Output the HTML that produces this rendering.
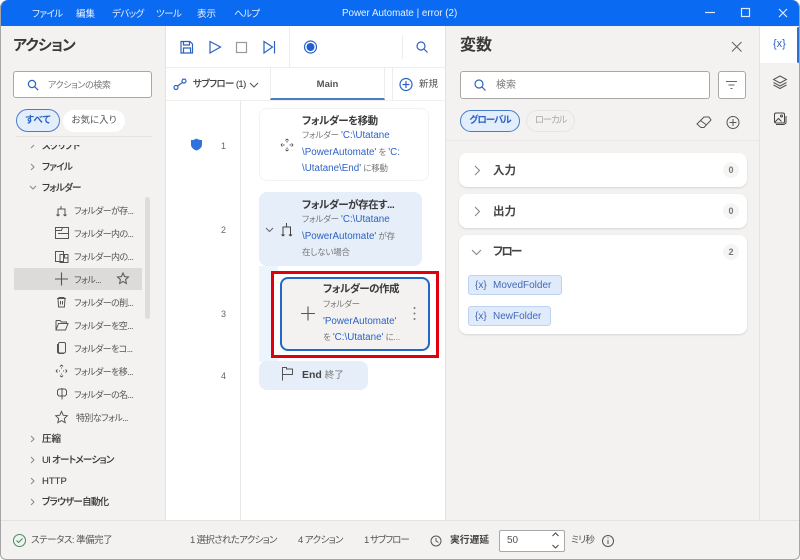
<!DOCTYPE html>
<html lang="ja"><head><meta charset="utf-8"><style>
*{box-sizing:border-box}
html,body{margin:0;padding:0;width:800px;height:560px;overflow:hidden;background:#fff}
body{font-family:"Liberation Sans","Noto Sans CJK JP",sans-serif;color:#323130;position:relative;font-feature-settings:"palt"}
.a{position:absolute;white-space:nowrap}
svg{position:absolute;overflow:visible;fill:none}
.t{font-size:9.5px;line-height:12px;color:#555}
.tb{color:#e8f1ff;font-size:9.5px;top:9px;line-height:12px;letter-spacing:-.6px}
.tree{font-size:9.5px;font-weight:500;color:#3a3a3a;line-height:12px;-webkit-text-stroke:.1px #3a3a3a;letter-spacing:-.7px}
.leaf{font-size:9px;color:#555;line-height:12px;left:74px;letter-spacing:-.6px}
.chev{stroke:#888;stroke-width:1}
.b{color:#2c62c4;font-size:9.8px;line-height:1;letter-spacing:0}
.desc{font-size:8.5px;color:#777;line-height:16.5px;letter-spacing:-.2px}
.ttl{font-size:10.5px;font-weight:700;line-height:14px;color:#3a3a3a;letter-spacing:-.5px}
.card{background:#fff;border-radius:8px;box-shadow:0 1px 2px rgba(0,0,0,.12)}
.chip{background:#dfeafb;border:1px solid #bcd3f2;border-radius:3px;height:20px;color:#4468b4;font-size:10px;line-height:19px;padding-left:6px}
.chip span{display:inline-block;width:18px}
.cnt{width:16px;height:16px;border-radius:8px;background:#f5f5f4;font-size:9px;font-weight:700;color:#777;text-align:center;line-height:16px}
.sec{left:493px;font-size:11.5px;font-weight:700;line-height:14px;color:#444}
.ic{stroke:#555;stroke-width:1}
.blue{stroke:#2c62c4;stroke-width:1.2}
</style></head><body>
<div class="a" style="left:0;top:0;width:800px;height:560px;background:#f3f2f1;border-radius:8px 8px 6px 6px;overflow:hidden">
<div class="a" style="left:0;top:0;width:800px;height:26px;background:#0b6af2"></div>
<div class="a tb" style="left:32px">ファイル</div>
<div class="a tb" style="left:76px;letter-spacing:0">編集</div>
<div class="a tb" style="left:112px">デバッグ</div>
<div class="a tb" style="left:156px">ツール</div>
<div class="a tb" style="left:197px;letter-spacing:0">表示</div>
<div class="a tb" style="left:234px">ヘルプ</div>
<div class="a tb" style="left:342px;font-size:9.8px;letter-spacing:0;top:8px">Power Automate | error (2)</div>
<svg style="left:0;top:0" width="800" height="26"><path d="M705 12.500h10" stroke="#dfeaff" stroke-width="1.200"/><rect x="741.500" y="8.500" width="8" height="8" stroke="#dfeaff" stroke-width="1.200"/><path d="M779 9l8 8M787 9l-8 8" stroke="#dfeaff" stroke-width="1.200"/></svg>

<!-- left panel -->
<div class="a" style="left:13px;top:37px;font-size:15px;font-weight:700;line-height:18px;color:#3a3a3a;letter-spacing:-.9px">アクション</div>
<div class="a" style="left:13px;top:71px;width:139px;height:27px;background:#fff;border:1px solid #a8a8a8;border-radius:3px"></div>
<svg style="left:27px;top:79px" width="12" height="12"><circle cx="5" cy="5" r="3.600" class="blue"/><path d="M7.700 7.700l3.500 3.500" class="blue"/></svg>
<div class="a" style="left:48px;top:79px;font-size:9px;line-height:12px;color:#777;letter-spacing:-.4px">アクションの検索</div>
<div class="a" style="left:16px;top:109px;width:44px;height:23px;border-radius:12px;background:#e3eefc;border:1px solid #4a7cc8;color:#2c62c4;font-size:9.5px;font-weight:700;text-align:center;line-height:21px">すべて</div>
<div class="a" style="left:63px;top:110px;width:62px;height:22px;border-radius:11px;background:#fff;color:#555;font-size:9.5px;text-align:center;line-height:22px">お気に入り</div>
<div class="a" style="left:16px;top:136px;width:136px;height:1px;background:#e6e5e4"></div>

<div class="a" style="left:0;top:145px;width:165px;height:374px;overflow:hidden">
<div class="a tree" style="left:42px;top:-4px">スクリプト</div>
<div class="a tree" style="left:42px;top:17px">ファイル</div>
<div class="a tree" style="left:42px;top:38px">フォルダー</div>
<div class="a" style="left:14px;top:123px;width:128px;height:22px;background:#dcdbda"></div>
<div class="a leaf" style="top:60px">フォルダーが存...</div>
<div class="a leaf" style="top:83px">フォルダー内の...</div>
<div class="a leaf" style="top:106px">フォルダー内の...</div>
<div class="a leaf" style="top:129px">フォル...</div>
<div class="a leaf" style="top:152px">フォルダーの削...</div>
<div class="a leaf" style="top:175px">フォルダーを空...</div>
<div class="a leaf" style="top:198px">フォルダーをコ...</div>
<div class="a leaf" style="top:221px">フォルダーを移...</div>
<div class="a leaf" style="top:244px">フォルダーの名...</div>
<div class="a leaf" style="top:267px;left:76px">特別なフォル...</div>
<div class="a tree" style="left:42px;top:289px;letter-spacing:0">圧縮</div>
<div class="a tree" style="left:42px;top:310px">UI オートメーション</div>
<div class="a tree" style="left:42px;top:331px;letter-spacing:0">HTTP</div>
<div class="a tree" style="left:42px;top:352px">ブラウザー自動化</div>
</div>
<div class="a" style="left:145px;top:197px;width:5px;height:122px;background:#dedddc;border-radius:3px"></div>
<svg style="left:0;top:0" width="165" height="520">
<path class="chev" d="M34 145l-3 3M31 164l3 3-3 3M31 436l3 3-3 3M31 457l3 3-3 3M31 478l3 3-3 3M31 499l3 3-3 3M30 186l3 3 3-3"/>
<g class="ic">
<path d="M61 206v3M58 216v-7h7v7M58 216l-1.500-1.500M58 216l1.500-1.500M65 216l-1.500-1.500M65 216l1.500-1.500"/>
<path d="M55.500 227.500h13v11h-13zM55.500 230.500h6l1-3M58 233.500h10.500"/>
<path d="M55.500 251.500h8v10h-8zM60 254.500h8v8h-8zM64.500 255v3h3"/>
<path d="M55 279h13M61.500 272.500v13" stroke-width="1.100"/>
<path d="M57 298.500h9M59 298.500v-1h5v1M58 298.500l.6 8.500h5.800l.6-8.500M60.500 301v3.500M62.500 301v3.500"/>
<path d="M56 320.500v9.500h9.500l2.500-6.500h-9.500l-2.500 6.500M56 320.500h4l1.500 1.500h5v1.500"/>
<rect x="58.500" y="342.500" width="7" height="10.500" rx="1.500"/><path d="M58 344.500h-.5v8l1.500 1h5"/>
<path d="M61.500 365l-1.500 1.500M61.500 365l1.500 1.500M61.500 377l-1.500-1.500M61.500 377l1.500-1.500M56 371l1.500-1.500M56 371l1.500 1.500M67 371l-1.500-1.500M67 371l-1.500 1.500M61.500 367.500v1M61.500 373.500v1M59 371h1M63 371h1"/>
<path d="M62 388v11.500M62 389h-3l-1.500 1.500v4l1.500 1.500H62M62 389h3l1.500 1.500v4L65 396H62"/>
<path d="M61.500 411.500l1.700 3.700 4.100.5-3 2.800.9 4.200-3.700-2.100-3.700 2.100.9-4.200-3-2.800 4.100-.5z"/>
<path d="M123 273l1.600 3.600 3.900.4-2.900 2.600.8 3.900-3.400-2-3.400 2 .8-3.900-2.900-2.600 3.900-.4z"/>
</g></svg>

<!-- centre -->
<div class="a" style="left:165px;top:26px;width:281px;height:494px;background:#fff;border-left:1px solid #e4e3e2;border-right:1px solid #e4e3e2"></div>
<div class="a" style="left:166px;top:67px;width:279px;height:1px;background:#eeedec"></div>
<div class="a" style="left:166px;top:100px;width:279px;height:1px;background:#f0efee"></div>
<div class="a" style="left:289px;top:27px;width:1px;height:40px;background:#eeedec"></div>
<div class="a" style="left:402px;top:35px;width:1px;height:24px;background:#eeedec"></div>
<div class="a" style="left:270px;top:68px;width:115px;height:32px;border-left:1px solid #eeedec;border-right:1px solid #eeedec;border-bottom:2px solid #4a7cc8;text-align:center;font-size:9.5px;font-weight:700;line-height:34px;color:#555">Main</div>
<div class="a" style="left:392px;top:68px;width:1px;height:32px;background:#eeedec"></div>
<svg style="left:0;top:0" width="446" height="110">
<path class="blue" d="M181 41.500h9l2.500 2.500v9h-11.500zM183.500 41.500v3.500h6v-3.500M183.500 52.500v-4.500h7v4.500"/>
<path class="blue" d="M210 41.500l10.500 5.500-10.500 6z"/>
<rect x="236.500" y="42.500" width="10" height="10" stroke="#999" stroke-width="1.200"/>
<path class="blue" d="M264 41.500l8.500 5.500-8.500 6zM274.500 41v12.500"/>
<circle cx="310.500" cy="47" r="6" class="blue"/><circle cx="310.500" cy="47" r="4" fill="#1f5fd0"/>
<circle cx="421" cy="46" r="4" class="blue"/><path class="blue" d="M424 49l3.500 3.500"/>
<circle cx="176" cy="87.500" r="2" class="blue"/><circle cx="184" cy="81" r="2" class="blue"/><path class="blue" d="M177.500 86l5-3.500"/>
<path d="M250 83l4 4 4-4" stroke="#555" stroke-width="1.100"/>
<circle cx="406" cy="84.500" r="6" class="blue"/><path class="blue" d="M406 81v7M402.500 84.500h7"/>
</svg>
<div class="a" style="left:193px;top:79px;font-size:9.5px;font-weight:500;line-height:12px;color:#444;-webkit-text-stroke:.1px #444;letter-spacing:-.6px">サブフロー (1)</div>
<div class="a" style="left:419px;top:79px;font-size:9.5px;line-height:12px;color:#555">新規</div>

<div class="a" style="left:240px;top:101px;width:1px;height:419px;background:#e8e7e6"></div>
<svg style="left:190px;top:138px" width="13" height="13"><path d="M6.500 0.500C8.500 1.800 10 2 12 2v4.500c0 3-2.500 5-5.500 6-3-1-5.500-3-5.500-6V2c2 0 3.500-.2 5.500-1.500z" fill="#2f74dc"/></svg>
<div class="a t" style="left:221px;top:140px;color:#666;font-size:9px">1</div>
<div class="a t" style="left:221px;top:224px;color:#666;font-size:9px">2</div>
<div class="a t" style="left:221px;top:308px;color:#666;font-size:9px">3</div>
<div class="a t" style="left:221px;top:370px;color:#666;font-size:9px">4</div>

<div class="a" style="left:259px;top:108px;width:170px;height:73px;background:#fff;border:1px solid #f3f2f1;border-radius:8px"></div>
<div class="a ttl" style="left:302px;top:114px">フォルダーを移動</div>
<div class="a desc" style="left:302px;top:127px">フォルダー <span class="b">'C:\Utatane</span><br><span class="b">\PowerAutomate'</span> を <span class="b">'C:</span><br><span class="b">\Utatane\End'</span> に移動</div>
<svg style="left:0;top:0" width="446" height="400">
<path class="ic" d="M287 139l-1.500 1.500M287 139l1.500 1.500M287 151l-1.500-1.500M287 151l1.500-1.500M281 145l1.500-1.500M281 145l1.500 1.500M293 145l-1.500-1.500M293 145l-1.500 1.500M287 141v1.500M287 147.500v1.500M283 145h1.500M289.500 145h1.500"/>
</svg>

<div class="a" style="left:259px;top:192px;width:163px;height:74px;background:#e6eef9;border-radius:8px"></div>
<div class="a" style="left:259px;top:266px;width:19px;height:96px;background:#eef4fb"></div>
<div class="a ttl" style="left:302px;top:198px">フォルダーが存在す...</div>
<div class="a desc" style="left:302px;top:211px">フォルダー <span class="b">'C:\Utatane</span><br><span class="b">\PowerAutomate'</span> が存<br>在しない場合</div>
<svg style="left:0;top:0" width="446" height="400">
<path d="M266 228l3.500 3.500 3.500-3.500" stroke="#666" stroke-width="1"/>
<path d="M286.500 223v4M283 236v-9h7.500v9M283 236l-1.500-1.500M283 236l1.500-1.500M290.500 236l-1.500-1.500M290.500 236l1.500-1.500" stroke="#444"/>
</svg>

<div class="a" style="left:271px;top:271px;width:168px;height:87px;border:3px solid #e0000d;background:#fff"></div>
<div class="a" style="left:280px;top:277px;width:150px;height:74px;background:#f3f2f1;border:2px solid #2268c8;border-radius:8px"></div>
<div class="a ttl" style="left:323px;top:282px">フォルダーの作成</div>
<div class="a desc" style="left:323px;top:296px">フォルダー<br><span class="b">'PowerAutomate'</span><br>を <span class="b">'C:\Utatane'</span> に...</div>
<svg style="left:0;top:0" width="446" height="400">
<path d="M301 313.500h14M308 306.500v14" stroke="#555" stroke-width="1.100"/>
<circle cx="414.500" cy="308" r="1" fill="#777"/><circle cx="414.500" cy="313.500" r="1" fill="#777"/><circle cx="414.500" cy="319" r="1" fill="#777"/>
</svg>
<div class="a" style="left:259px;top:361px;width:109px;height:29px;background:#e6eef9;border-radius:8px"></div>
<div class="a" style="left:302px;top:368px;font-size:10.5px;line-height:14px;color:#444"><b>End</b> <span style="font-size:9.5px;color:#777">終了</span></div>
<svg style="left:0;top:0" width="446" height="400"><path d="M282.500 380.500v-13h4v1.500h6v5.500h-10" stroke="#555" stroke-width="1"/></svg>

<!-- right panel -->
<div class="a" style="left:460px;top:36px;font-size:16px;font-weight:700;line-height:20px;color:#3a3a3a">変数</div>
<div class="a" style="left:460px;top:71px;width:250px;height:28px;background:#fff;border:1px solid #a8a8a8;border-radius:3px"></div>
<div class="a" style="left:718px;top:71px;width:28px;height:28px;background:#fff;border:1px solid #a8a8a8;border-radius:3px"></div>
<svg style="left:0;top:0" width="800" height="140">
<path d="M732 42l9.500 9.500M741.500 42l-9.500 9.500" stroke="#666" stroke-width="1.100"/>
<circle cx="479" cy="84" r="4" class="blue"/><path class="blue" d="M482 87l3.500 3.500"/>
<path d="M726 81.500h11M728.500 85h6M730.500 88.500h2" stroke="#666" stroke-width="1"/>
<path d="M697 124l7-7 5 0 2 3-7 7.500h-3zM700.500 120.500l6 4.500" stroke="#555" stroke-width="1"/>
<circle cx="733" cy="122.500" r="6" stroke="#555"/><path d="M733 119v7M729.500 122.500h7" stroke="#555"/>
</svg>
<div class="a" style="left:496px;top:79px;font-size:10px;line-height:13px;color:#777">検索</div>
<div class="a" style="left:460px;top:110px;width:60px;height:22px;border-radius:11px;background:#e3eefc;border:1px solid #4a7cc8;color:#2c62c4;font-size:9.5px;font-weight:700;text-align:center;line-height:20px;letter-spacing:-1px">グローバル</div>
<div class="a" style="left:526px;top:110px;width:49px;height:22px;border-radius:11px;border:1px solid #e6e5e4;color:#aaa;font-size:9.5px;text-align:center;line-height:20px;letter-spacing:-1.2px">ローカル</div>
<div class="a" style="left:446px;top:140px;width:313px;height:1px;background:#e8e7e6"></div>

<div class="a card" style="left:459px;top:153px;width:288px;height:34px"></div>
<div class="a card" style="left:459px;top:194px;width:288px;height:34px"></div>
<div class="a card" style="left:459px;top:235px;width:288px;height:99px"></div>
<div class="a sec" style="top:164px">入力</div>
<div class="a sec" style="top:205px">出力</div>
<div class="a sec" style="top:245px;letter-spacing:-1.8px">フロー</div>
<div class="a cnt" style="left:723px;top:162px">0</div>
<div class="a cnt" style="left:723px;top:203px">0</div>
<div class="a cnt" style="left:723px;top:244px">2</div>
<svg style="left:0;top:0" width="800" height="300"><path d="M475 166l4.500 4.500-4.500 4.500M475 207l4.500 4.500-4.500 4.500M472 250l4.500 4.500 4.500-4.500" stroke="#888" stroke-width="1.100"/></svg>
<div class="a chip" style="left:468px;top:275px;width:94px"><span>{x}</span>MovedFolder</div>
<div class="a chip" style="left:468px;top:306px;width:83px"><span>{x}</span>NewFolder</div>

<!-- far right -->
<div class="a" style="left:759px;top:26px;width:1px;height:494px;background:#e4e3e2"></div>
<div class="a" style="left:760px;top:27px;width:37px;height:36px;background:#fff"></div>
<div class="a" style="left:797px;top:27px;width:3px;height:36px;background:#2f6ecf;border-radius:2px"></div>
<div class="a" style="left:773px;top:37px;font-size:11px;line-height:14px;color:#2c62c4">{x}</div>
<svg style="left:0;top:0" width="800" height="140">
<path d="M780 76l6.500 3.500-6.500 3.500-6.500-3.500zM773.500 82.500l6.500 3.500 6.500-3.500M773.500 85l6.500 3.500 6.500-3.500" stroke="#555" fill="none"/>
<rect x="774.500" y="113" width="10" height="10" rx="1.500" stroke="#444"/><circle cx="781.500" cy="116" r="1" stroke="#444"/><path d="M775 122l3.500-3.500 3 3M776 124.500h8l2-1.500v-7" stroke="#444"/>
</svg>

<!-- status bar -->
<div class="a" style="left:0;top:520px;width:800px;height:40px;background:#f3f2f1;border-top:1px solid #e4e3e2"></div>
<svg style="left:0;top:0" width="800" height="560">
<circle cx="19.500" cy="540.500" r="6" stroke="#3f8f5a" stroke-width="1"/><path d="M16.500 540.500l2 2 4-4" stroke="#3f8f5a" stroke-width="1"/>
<circle cx="436" cy="541" r="5" stroke="#555"/><path d="M436 538v3l2.500 1.500" stroke="#555"/>
<circle cx="608" cy="541" r="5.500" stroke="#555"/><path d="M608 540v4M608 537.500v1" stroke="#555"/>
</svg>
<div class="a t" style="left:31px;top:535px;letter-spacing:-.5px">ステータス: 準備完了</div>
<div class="a t" style="left:190px;top:535px;letter-spacing:-.7px">1 選択されたアクション</div>
<div class="a t" style="left:298px;top:535px;letter-spacing:-.6px">4 アクション</div>
<div class="a t" style="left:364px;top:535px;letter-spacing:-1px">1 サブフロー</div>
<div class="a t" style="left:450px;top:535px;color:#444;font-weight:700;font-size:9.8px">実行遅延</div>
<div class="a" style="left:499px;top:530px;width:66px;height:22px;background:#fff;border:1px solid #a8a8a8;border-radius:2px;font-size:10px;line-height:20px;padding-left:7px;color:#555">50</div>
<svg style="left:0;top:0" width="800" height="560"><path d="M552.500 536l3-3 3 3M552.500 545l3 3 3-3" stroke="#444"/></svg>
<div class="a t" style="left:571px;top:535px;letter-spacing:-.6px">ミリ秒</div>
</div>
<div class="a" style="left:0;top:0;width:800px;height:560px;border:1px solid #a5a5a5;border-top:none;border-radius:8px 8px 6px 6px"></div>
</body></html>
